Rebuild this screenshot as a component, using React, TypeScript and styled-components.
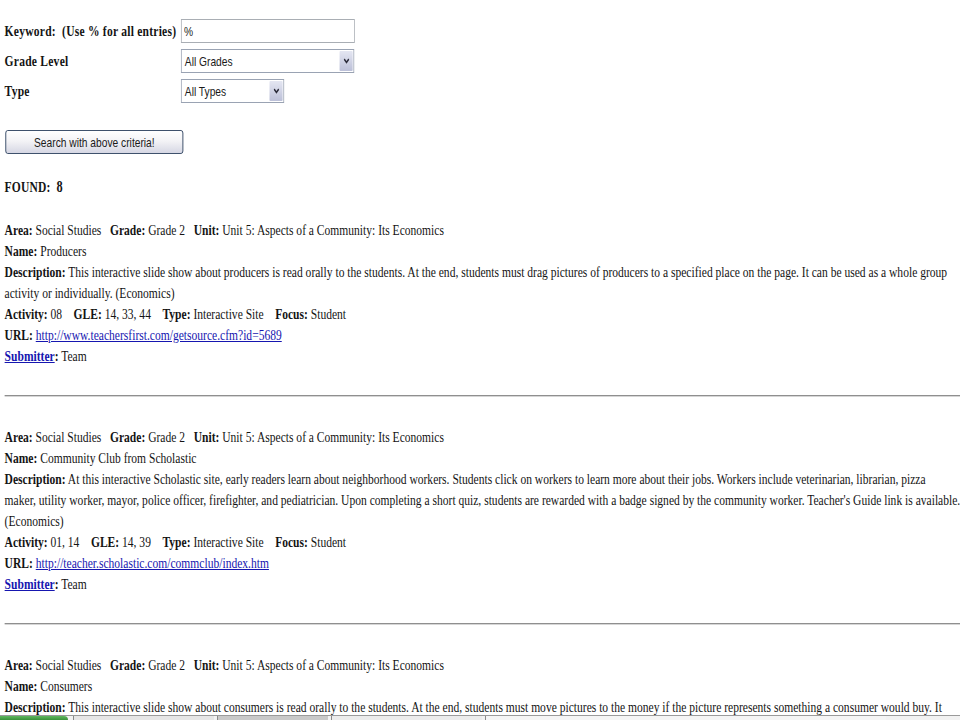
import { ReactElement } from 'react';
import styled, { createGlobalStyle } from 'styled-components';

// the whole capture is squeezed sideways, so the page is laid out wide and scaled down on x
const SCALE_X = 0.77;
const PAGE_WIDTH = Math.ceil(960 / SCALE_X);

const SP = '\u00a0';

type ResourceRecord = {
  area: string;
  grade: string;
  unit: string;
  name: string;
  description: string[];
  activity: string;
  gle: string;
  type: string;
  focus: string;
  url: string;
  submitter: string;
};

const RECORDS: ResourceRecord[] = [
  {
    area: 'Social Studies',
    grade: 'Grade 2',
    unit: 'Unit 5: Aspects of a Community: Its Economics',
    name: 'Producers',
    description: [
      'This interactive slide show about producers is read orally to the students. At the end, students must drag pictures of producers to a specified place on the page. It can be used as a whole group',
      'activity or individually. (Economics)',
    ],
    activity: '08',
    gle: '14, 33, 44',
    type: 'Interactive Site',
    focus: 'Student',
    url: 'http://www.teachersfirst.com/getsource.cfm?id=5689',
    submitter: 'Team',
  },
  {
    area: 'Social Studies',
    grade: 'Grade 2',
    unit: 'Unit 5: Aspects of a Community: Its Economics',
    name: 'Community Club from Scholastic',
    description: [
      'At this interactive Scholastic site, early readers learn about neighborhood workers. Students click on workers to learn more about their jobs. Workers include veterinarian, librarian, pizza',
      "maker, utility worker, mayor, police officer, firefighter, and pediatrician. Upon completing a short quiz, students are rewarded with a badge signed by the community worker. Teacher's Guide link is available.",
      '(Economics)',
    ],
    activity: '01, 14',
    gle: '14, 39',
    type: 'Interactive Site',
    focus: 'Student',
    url: 'http://teacher.scholastic.com/commclub/index.htm',
    submitter: 'Team',
  },
  {
    area: 'Social Studies',
    grade: 'Grade 2',
    unit: 'Unit 5: Aspects of a Community: Its Economics',
    name: 'Consumers',
    description: [
      'This interactive slide show about consumers is read orally to the students. At the end, students must move pictures to the money if the picture represents something a consumer would buy. It',
      'can be used as a whole group activity or individually. (Economics)',
    ],
    activity: '08',
    gle: '14, 33, 44',
    type: 'Interactive Site',
    focus: 'Student',
    url: 'http://www.teachersfirst.com/getsource.cfm?id=5690',
    submitter: 'Team',
  },
];

const GlobalStyle = createGlobalStyle`
  html, body {
    margin: 0;
    padding: 0;
    overflow: hidden;
    background: #ffffff;
  }
`;

const Screen = styled.div`
  position: relative;
  width: 960px;
  height: 720px;
  overflow: hidden;
  background: #ffffff;
`;

const Page = styled.div`
  box-sizing: border-box;
  width: ${PAGE_WIDTH}px;
  padding: 16px 0 0 6px;
  transform: scaleX(${SCALE_X});
  transform-origin: 0 0;
  font-family: 'Liberation Serif', 'Times New Roman', serif;
  font-size: 15px;
  line-height: 21px;
  color: #141414;
`;

const SearchForm = styled.form`
  display: grid;
  grid-template-columns: 229px auto;
  grid-auto-rows: 30px;
  align-items: center;
  justify-items: start;
`;

const FieldLabel = styled.label`
  font-weight: bold;
  letter-spacing: 0.3px;
  white-space: nowrap;
`;

const controlFont = `
  font-family: 'Liberation Sans', Arial, sans-serif;
  font-size: 13.3px;
  color: #1a1a1a;
`;

const TextInput = styled.input`
  box-sizing: border-box;
  width: 226px;
  height: 24px;
  margin: 0;
  padding: 0 3px;
  border: 1px solid #a9aeb4;
  outline: none;
  ${controlFont}
`;

const SelectBox = styled.div<{ $width: number }>`
  box-sizing: border-box;
  display: flex;
  align-items: center;
  width: ${({ $width }) => $width}px;
  height: 24px;
  border: 1px solid #9aa3b3;
  background: #ffffff;
`;

const SelectValue = styled.span`
  flex: 1;
  padding-left: 4px;
  white-space: nowrap;
  ${controlFont}
`;

const SelectArrow = styled.span`
  display: flex;
  align-items: center;
  justify-content: center;
  align-self: stretch;
  width: 17px;
  margin: 1px;
  border-radius: 1px;
  background: linear-gradient(#e4e6f2, #bcc0d8);
`;

const SearchButton = styled.button`
  display: block;
  box-sizing: border-box;
  width: 231px;
  height: 24px;
  margin: 24px 0 0 1px;
  padding: 0;
  border: 1px solid #243a58;
  border-radius: 3px;
  background: linear-gradient(#ffffff 0%, #f3f3f6 45%, #d6d7e4 100%);
  ${controlFont}
`;

const FoundLine = styled.div`
  margin-top: 22px;
  font-weight: bold;
  letter-spacing: 0.2px;
  white-space: nowrap;
`;

const FoundCount = styled.span`
  font-size: 16px;
`;

const RecordList = styled.div`
  margin-top: 22px;
`;

const RecordBlock = styled.div`
  display: flex;
  flex-direction: column;
`;

const Line = styled.div`
  white-space: nowrap;
`;

const Key = styled.b`
  font-weight: bold;
`;

const Link = styled.a<{ $bold?: boolean }>`
  color: #1616b0;
  text-decoration: underline;
  font-weight: ${({ $bold }) => ($bold ? 'bold' : 'normal')};
`;

const Divider = styled.hr`
  margin: 28px 0 30px;
  height: 0;
  border: none;
  border-top: 1px solid #8f8f8f;
  border-bottom: 1px solid #d6d6d6;
`;

const Taskbar = styled.div`
  position: absolute;
  left: 0;
  right: 0;
  bottom: 0;
  display: flex;
  height: 4px;
  background: #f2f2f2;
  border-top: 1px solid #9a9a9a;
`;

const TaskSegment = styled.span<{ $width: number; $tone: string }>`
  width: ${({ $width }) => $width}px;
  margin-right: 3px;
  background: ${({ $tone }) => $tone};
  border-left: 1px solid #8a8a8a;
`;

const StartButton = styled.span`
  width: 68px;
  margin-right: 5px;
  border-radius: 0 6px 0 0;
  background: linear-gradient(#5fb85f, #3a913a);
`;

const Chevron = (): ReactElement => (
  <svg width="8" height="6" viewBox="0 0 8 6" aria-hidden>
    <path d="M1 1.2 L4 4.4 L7 1.2" fill="none" stroke="#2b2b3a" strokeWidth="1.8" />
  </svg>
);

const Select = ({ value, width }: { value: string; width: number }): ReactElement => (
  <SelectBox $width={width} role="combobox">
    <SelectValue>{value}</SelectValue>
    <SelectArrow>
      <Chevron />
    </SelectArrow>
  </SelectBox>
);

const GAP = `${SP}${SP}${SP} `;

const Record = ({ record }: { record: ResourceRecord }): ReactElement => (
  <RecordBlock>
    <Line>
      <Key>Area:</Key> {record.area}
      {SP}
      {SP} <Key>Grade:</Key> {record.grade}
      {SP}
      {SP} <Key>Unit:</Key> {record.unit}
    </Line>
    <Line>
      <Key>Name:</Key> {record.name}
    </Line>
    <Line>
      <Key>Description:</Key>{' '}
      {record.description.map((text, i) => (
        <span key={i}>
          {i > 0 && <br />}
          {text}
        </span>
      ))}
    </Line>
    <Line>
      <Key>Activity:</Key> {record.activity}
      {GAP}
      <Key>GLE:</Key> {record.gle}
      {GAP}
      <Key>Type:</Key> {record.type}
      {GAP}
      <Key>Focus:</Key> {record.focus}
    </Line>
    <Line>
      <Key>URL:</Key> <Link href={record.url}>{record.url}</Link>
    </Line>
    <Line>
      <Link $bold href="#submitter">
        Submitter
      </Link>
      <Key>:</Key> {record.submitter}
    </Line>
  </RecordBlock>
);

export default function App(): ReactElement {
  return (
    <Screen>
      <GlobalStyle />
      <Page>
        <SearchForm onSubmit={(e) => e.preventDefault()}>
          <FieldLabel htmlFor="keyword">Keyword:{SP} (Use % for all entries)</FieldLabel>
          <TextInput id="keyword" defaultValue="%" />
          <FieldLabel>Grade Level</FieldLabel>
          <Select value="All Grades" width={225} />
          <FieldLabel>Type</FieldLabel>
          <Select value="All Types" width={134} />
        </SearchForm>
        <SearchButton type="button">Search with above criteria!</SearchButton>
        <FoundLine>
          FOUND:{SP} <FoundCount>{RECORDS.length + 5}</FoundCount>
        </FoundLine>
        <RecordList>
          {RECORDS.map((record, i) => (
            <div key={i}>
              <Record record={record} />
              <Divider />
            </div>
          ))}
        </RecordList>
      </Page>
      <Taskbar>
        <StartButton />
        <TaskSegment $width={140} $tone="#e6e6e6" />
        <TaskSegment $width={110} $tone="#c9c9c9" />
        <TaskSegment $width={150} $tone="#ececec" />
        <TaskSegment $width={400} $tone="#f5f5f5" />
      </Taskbar>
    </Screen>
  );
}
